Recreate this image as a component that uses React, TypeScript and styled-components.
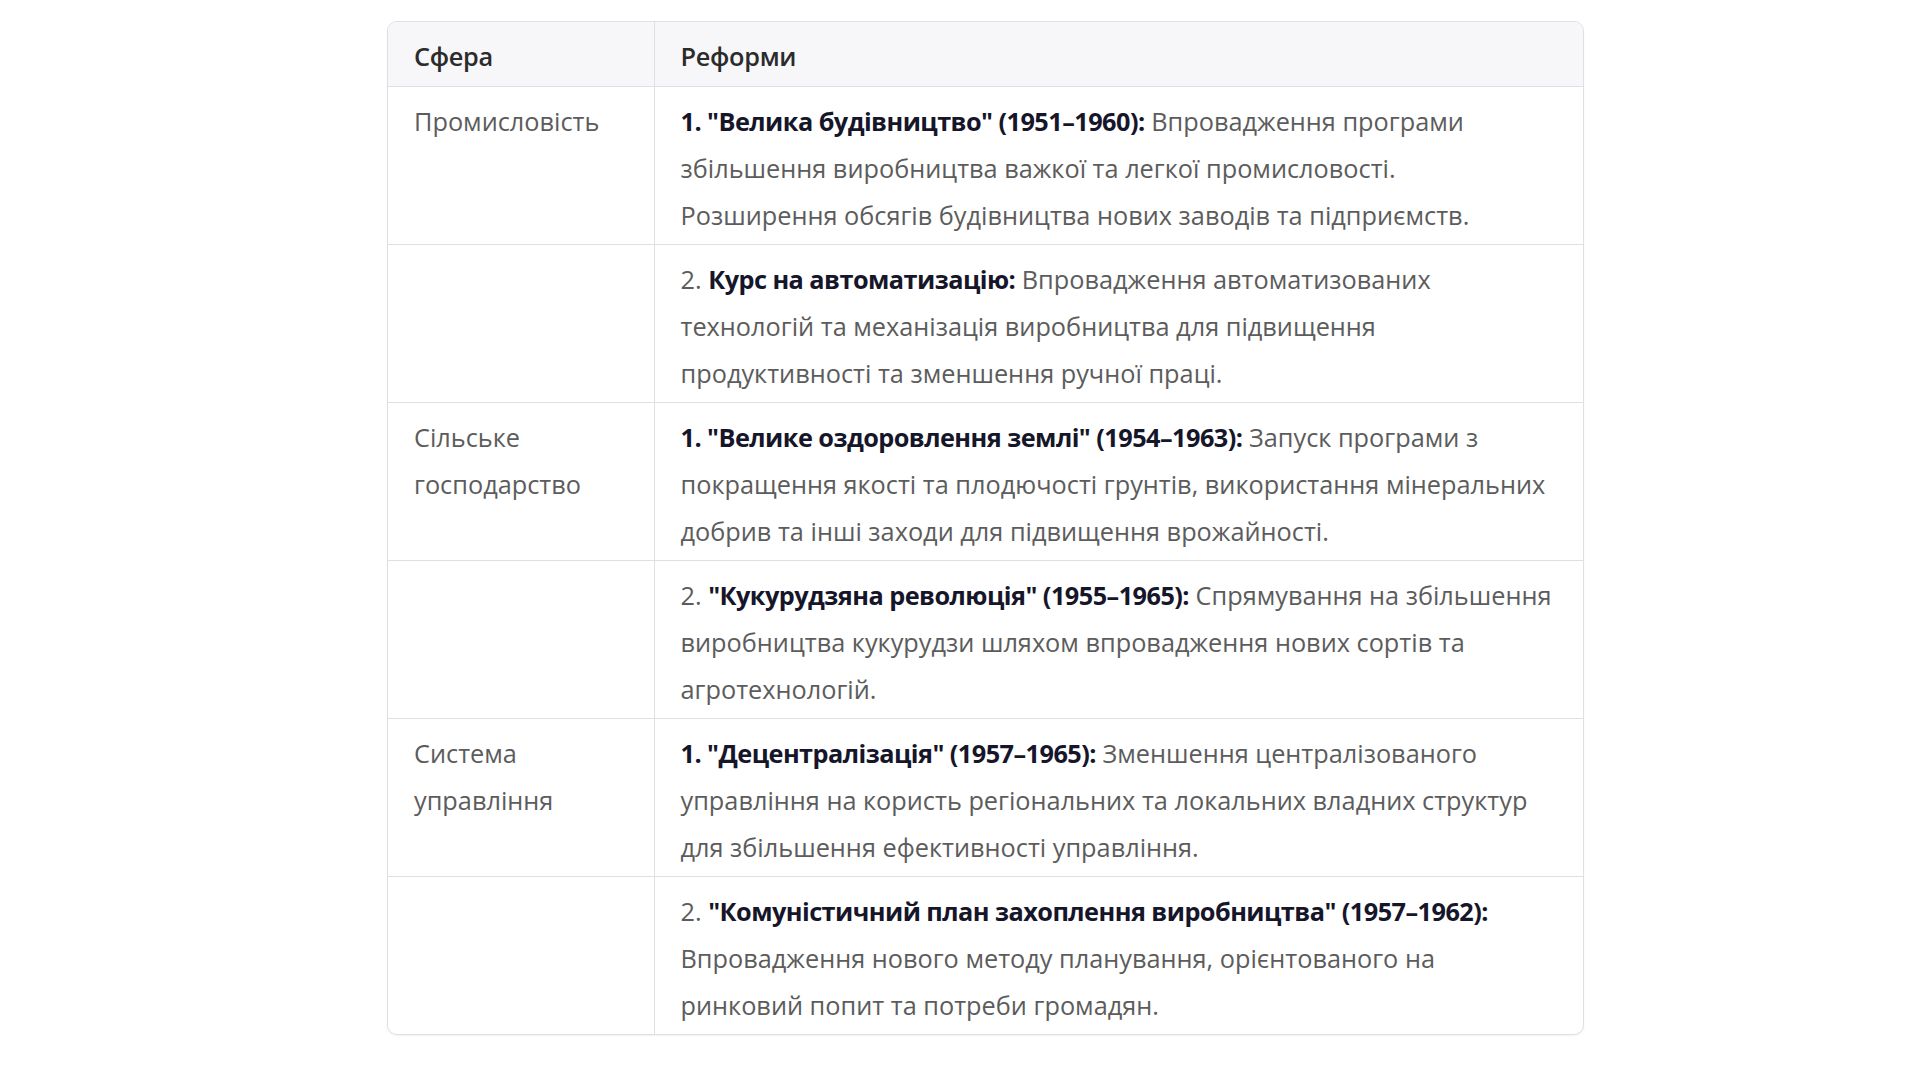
import React from "react";
import styled, { createGlobalStyle } from "styled-components";

// a line is a list of pieces; a piece in b is bold
type Piece = string | { b: string };

interface ReformRow {
  sphere?: string;
  lines: Piece[][];
}

const rows: ReformRow[] = [
  {
    sphere: "Промисловість",
    lines: [
      [{ b: "1. \"Велика будівництво\" (1951–1960):" }, " Впровадження програми"],
      ["збільшення виробництва важкої та легкої промисловості."],
      ["Розширення обсягів будівництва нових заводів та підприємств."],
    ],
  },
  {
    lines: [
      ["2. ", { b: "Курс на автоматизацію:" }, " Впровадження автоматизованих"],
      ["технологій та механізація виробництва для підвищення"],
      ["продуктивності та зменшення ручної праці."],
    ],
  },
  {
    sphere: "Сільське господарство",
    lines: [
      [{ b: "1. \"Велике оздоровлення землі\" (1954–1963):" }, " Запуск програми з"],
      ["покращення якості та плодючості грунтів, використання мінеральних"],
      ["добрив та інші заходи для підвищення врожайності."],
    ],
  },
  {
    lines: [
      ["2. ", { b: "\"Кукурудзяна революція\" (1955–1965):" }, " Спрямування на збільшення"],
      ["виробництва кукурудзи шляхом впровадження нових сортів та"],
      ["агротехнологій."],
    ],
  },
  {
    sphere: "Система управління",
    lines: [
      [{ b: "1. \"Децентралізація\" (1957–1965):" }, " Зменшення централізованого"],
      ["управління на користь регіональних та локальних владних структур"],
      ["для збільшення ефективності управління."],
    ],
  },
  {
    lines: [
      ["2. ", { b: "\"Комуністичний план захоплення виробництва\" (1957–1962):" }],
      ["Впровадження нового методу планування, орієнтованого на"],
      ["ринковий попит та потреби громадян."],
    ],
  },
];

const App = () => {
  return (
    <>
      <GlobalStyle />
      <Page>
        <TableWrapper>
          <Table>
            <colgroup>
              <col style={{ width: 266 }} />
              <col />
            </colgroup>
            <thead>
              <tr>
                <HeadCell>Сфера</HeadCell>
                <HeadCell $last>Реформи</HeadCell>
              </tr>
            </thead>
            <tbody>
              {rows.map((row, idx) => (
                <tr key={idx}>
                  <Cell $lastRow={idx === rows.length - 1}>{row.sphere}</Cell>
                  <Cell $last $lastRow={idx === rows.length - 1}>
                    {row.lines.map((line, i) => (
                      <Line key={i}>
                        {line.map((piece, j) =>
                          typeof piece === "string" ? (
                            <React.Fragment key={j}>{piece}</React.Fragment>
                          ) : (
                            <Strong key={j}>{piece.b}</Strong>
                          )
                        )}
                      </Line>
                    ))}
                  </Cell>
                </tr>
              ))}
            </tbody>
          </Table>
        </TableWrapper>
      </Page>
    </>
  );
};

export default App;

const GlobalStyle = createGlobalStyle`
  body {
    margin: 0;
    background: #ffffff;
    font-family: "Open Sans", "Noto Sans", sans-serif;
  }
`;

const Page = styled.div`
  width: 1920px;
  height: 1080px;
  padding: 21px 0 0 387px;
  box-sizing: border-box;
`;

const TableWrapper = styled.div`
  width: 1195px;
  border: 1.5px solid #dfdfe4;
  border-radius: 10px;
  overflow: hidden;
  box-shadow: 0 1px 2px rgba(0, 0, 0, 0.06);
`;

const Table = styled.table`
  width: 100%;
  border-collapse: collapse;
  table-layout: fixed;
  font-size: 25.3px;
  line-height: 47px;
`;

const HeadCell = styled.th<{ $last?: boolean }>`
  background: #f7f7f9;
  text-align: left;
  font-weight: 600;
  letter-spacing: -0.3px;
  color: #2b2b2b;
  padding: 11px 26px 6px 26px;
  border-bottom: 1.5px solid #dfdfe4;
  border-right: ${props => (props.$last ? "none" : "1.5px solid #dfdfe4")};
`;

const Cell = styled.td<{ $last?: boolean; $lastRow?: boolean }>`
  vertical-align: top;
  color: #5c5c5c;
  padding: 11px 26px 5px 26px;
  border-bottom: ${props => (props.$lastRow ? "none" : "1.5px solid #dfdfe4")};
  border-right: ${props => (props.$last ? "none" : "1.5px solid #dfdfe4")};
`;

const Line = styled.div`
  white-space: nowrap;
`;

const Strong = styled.strong`
  font-weight: 700;
  letter-spacing: -0.55px;
  color: #16162a;
`;
